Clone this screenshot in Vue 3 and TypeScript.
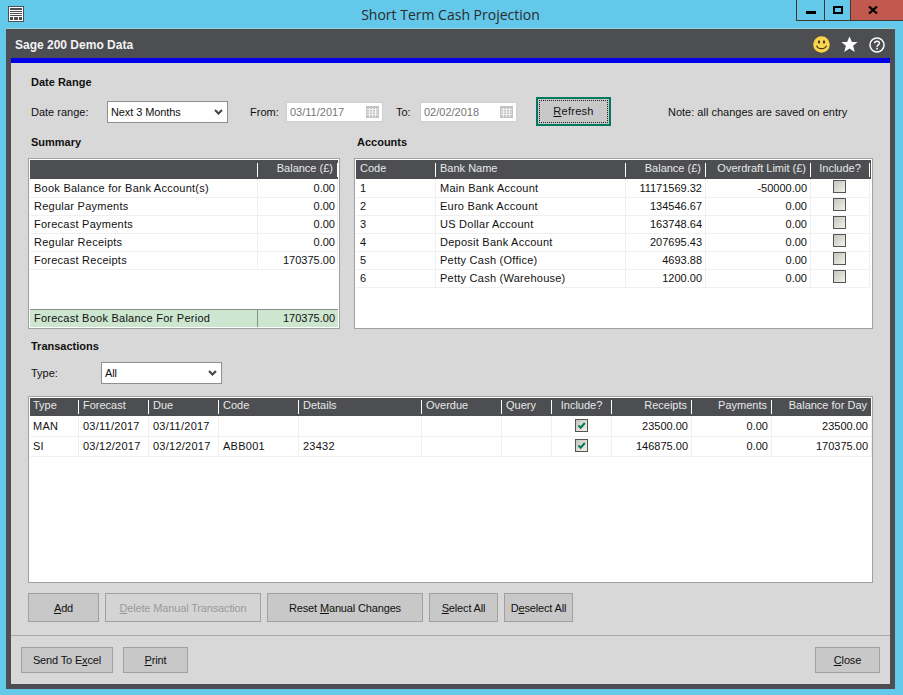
<script setup lang="ts">
interface SummaryRow {
  label: string
  balance: string
}
interface AccountRow {
  code: string
  name: string
  balance: string
  overdraft: string
}
interface TransactionRow {
  type: string
  forecast: string
  due: string
  code: string
  details: string
  receipts: string
  payments: string
  balance: string
}

const summaryRows: SummaryRow[] = [
  { label: 'Book Balance for Bank Account(s)', balance: '0.00' },
  { label: 'Regular Payments', balance: '0.00' },
  { label: 'Forecast Payments', balance: '0.00' },
  { label: 'Regular Receipts', balance: '0.00' },
  { label: 'Forecast Receipts', balance: '170375.00' }
]

const accountRows: AccountRow[] = [
  { code: '1', name: 'Main Bank Account', balance: '11171569.32', overdraft: '-50000.00' },
  { code: '2', name: 'Euro Bank Account', balance: '134546.67', overdraft: '0.00' },
  { code: '3', name: 'US Dollar Account', balance: '163748.64', overdraft: '0.00' },
  { code: '4', name: 'Deposit Bank Account', balance: '207695.43', overdraft: '0.00' },
  { code: '5', name: 'Petty Cash (Office)', balance: '4693.88', overdraft: '0.00' },
  { code: '6', name: 'Petty Cash (Warehouse)', balance: '1200.00', overdraft: '0.00' }
]

const transactionRows: TransactionRow[] = [
  { type: 'MAN', forecast: '03/11/2017', due: '03/11/2017', code: '', details: '', receipts: '23500.00', payments: '0.00', balance: '23500.00' },
  { type: 'SI', forecast: '03/12/2017', due: '03/12/2017', code: 'ABB001', details: '23432', receipts: '146875.00', payments: '0.00', balance: '170375.00' }
]
</script>

<template>
  <div class="desktop">
    <!-- OS title bar -->
    <header class="titlebar">
      <svg class="app-icon" width="16" height="16" viewBox="0 0 16 16">
        <rect width="16" height="16" fill="#4d4e52" />
        <rect x="1" y="1" width="14" height="14" fill="#fff" />
        <rect x="2" y="2" width="12" height="2" fill="#4d4e52" />
        <rect x="2" y="5" width="12" height="1" fill="#4d4e52" />
        <rect x="2" y="7" width="12" height="1" fill="#4d4e52" />
        <rect x="2" y="9" width="12" height="1" fill="#4d4e52" />
        <rect x="2" y="11" width="3" height="3" fill="#4d4e52" />
        <rect x="6" y="11" width="4" height="3" fill="#4d4e52" />
        <rect x="11" y="11" width="3" height="3" fill="#4d4e52" />
      </svg>
      <span class="title-text">Short Term Cash Projection</span>
      <div class="win-controls">
        <div class="win-btn win-min"><span class="min-glyph" /></div>
        <div class="win-btn win-max"><span class="max-glyph" /></div>
        <div class="win-btn win-close">
          <svg width="10" height="8" viewBox="0 0 10 8">
            <path d="M1 0.5L9 7.5M9 0.5L1 7.5" stroke="#000" stroke-width="2.2" fill="none" />
          </svg>
        </div>
      </div>
    </header>

    <div class="window">
      <div class="window-head">
        <span class="company">Sage 200 Demo Data</span>
        <div class="head-icons">
          <svg width="17" height="17" viewBox="0 0 17 17">
            <circle cx="8.5" cy="8.5" r="8.3" fill="#fbd44c" />
            <ellipse cx="6" cy="6" rx="1.1" ry="1.7" fill="#3c3a2c" />
            <ellipse cx="11" cy="6" rx="1.1" ry="1.7" fill="#3c3a2c" />
            <path d="M3.6 9.6C4.6 13.6 12.4 13.6 13.4 9.6" stroke="#3c3a2c" stroke-width="1.2" fill="none" />
          </svg>
          <svg width="17" height="17" viewBox="0 0 17 17">
            <path d="M8.5 0.5L10.9 6H16.6L12.1 9.8L13.8 16L8.5 12.5L3.2 16L4.9 9.8L0.4 6H6.1Z" fill="#fff" />
          </svg>
          <svg width="16" height="16" viewBox="0 0 16 16">
            <circle cx="8" cy="8" r="7" stroke="#fff" stroke-width="1.5" fill="none" />
            <path d="M5.6 6.2C5.7 3.6 10.4 3.6 10.4 6.2C10.4 7.8 8 7.8 8 9.8" stroke="#fff" stroke-width="1.5" fill="none" />
            <rect x="7.2" y="10.8" width="1.6" height="1.7" fill="#fff" />
          </svg>
        </div>
      </div>
      <div class="blue-rule" />

      <main class="content">
        <h2 class="section-title">Date Range</h2>
        <div class="range-row">
          <label class="field-label label-range">Date range:</label>
          <div class="select-wrap select-range">
            <select class="select-box">
              <option>Next 3 Months</option>
            </select>
            <svg class="chevron" width="9" height="6" viewBox="0 0 9 6">
              <path d="M1 1L4.5 4.5L8 1" stroke="#444" stroke-width="2" fill="none" />
            </svg>
          </div>
          <label class="field-label label-from">From:</label>
          <div class="date-box">
            <input class="date-input" value="03/11/2017" readonly />
            <svg class="cal-icon" width="13" height="12" viewBox="0 0 13 12">
              <rect width="13" height="12" fill="#c4c4c4" />
              <path d="M1 3.5H12M1 6H12M1 8.5H12M3.5 2V11M6.5 2V11M9.5 2V11" stroke="#f2f2f2" stroke-width="1" fill="none" />
            </svg>
          </div>
          <label class="field-label label-to">To:</label>
          <div class="date-box">
            <input class="date-input" value="02/02/2018" readonly />
            <svg class="cal-icon" width="13" height="12" viewBox="0 0 13 12">
              <rect width="13" height="12" fill="#c4c4c4" />
              <path d="M1 3.5H12M1 6H12M1 8.5H12M3.5 2V11M6.5 2V11M9.5 2V11" stroke="#f2f2f2" stroke-width="1" fill="none" />
            </svg>
          </div>
          <button class="refresh-btn"><span class="refresh-inner"><u>R</u>efresh</span></button>
          <span class="note">Note: all changes are saved on entry</span>
        </div>

        <div class="panels">
          <section class="summary-col">
            <h2 class="section-title">Summary</h2>
            <div class="grid-box summary-box">
              <div class="grid-head summary-cols">
                <span class="hcell" />
                <span class="hcell right">Balance (£)</span>
              </div>
              <div v-for="row in summaryRows" :key="row.label" class="grid-row summary-cols">
                <span class="cell">{{ row.label }}</span>
                <span class="cell right">{{ row.balance }}</span>
              </div>
              <div class="summary-total summary-cols">
                <span class="cell">Forecast Book Balance For Period</span>
                <span class="cell right">170375.00</span>
              </div>
            </div>
          </section>

          <section class="accounts-col">
            <h2 class="section-title">Accounts</h2>
            <div class="grid-box accounts-box">
              <div class="grid-head account-cols">
                <span class="hcell">Code</span>
                <span class="hcell">Bank Name</span>
                <span class="hcell right">Balance (£)</span>
                <span class="hcell right">Overdraft Limit (£)</span>
                <span class="hcell center">Include?</span>
              </div>
              <div v-for="row in accountRows" :key="row.code" class="grid-row account-cols">
                <span class="cell">{{ row.code }}</span>
                <span class="cell">{{ row.name }}</span>
                <span class="cell right">{{ row.balance }}</span>
                <span class="cell right">{{ row.overdraft }}</span>
                <span class="cell center"><span class="check" /></span>
              </div>
            </div>
          </section>
        </div>

        <h2 class="section-title tx-title">Transactions</h2>
        <div class="type-row">
          <label class="field-label label-type">Type:</label>
          <div class="select-wrap select-type">
            <select class="select-box">
              <option>All</option>
            </select>
            <svg class="chevron" width="9" height="6" viewBox="0 0 9 6">
              <path d="M1 1L4.5 4.5L8 1" stroke="#444" stroke-width="2" fill="none" />
            </svg>
          </div>
        </div>

        <div class="grid-box tx-box">
          <div class="grid-head tx-head tx-cols">
            <span class="hcell">Type</span>
            <span class="hcell">Forecast</span>
            <span class="hcell">Due</span>
            <span class="hcell">Code</span>
            <span class="hcell">Details</span>
            <span class="hcell">Overdue</span>
            <span class="hcell">Query</span>
            <span class="hcell center">Include?</span>
            <span class="hcell right">Receipts</span>
            <span class="hcell right">Payments</span>
            <span class="hcell right">Balance for Day</span>
          </div>
          <div v-for="row in transactionRows" :key="row.type" class="grid-row tx-row tx-cols">
            <span class="cell">{{ row.type }}</span>
            <span class="cell">{{ row.forecast }}</span>
            <span class="cell">{{ row.due }}</span>
            <span class="cell">{{ row.code }}</span>
            <span class="cell">{{ row.details }}</span>
            <span class="cell" />
            <span class="cell" />
            <span class="cell center">
              <span class="check">
                <svg width="11" height="11" viewBox="0 0 11 11">
                  <path d="M2.5 5.5L4.7 7.7L8.8 3" stroke="#007a5e" stroke-width="2" fill="none" />
                </svg>
              </span>
            </span>
            <span class="cell right">{{ row.receipts }}</span>
            <span class="cell right">{{ row.payments }}</span>
            <span class="cell right">{{ row.balance }}</span>
          </div>
        </div>

        <div class="action-row">
          <button class="btn w-add"><u>A</u>dd</button>
          <button class="btn w-wide disabled"><u>D</u>elete Manual Transaction</button>
          <button class="btn w-wide">Reset <u>M</u>anual Changes</button>
          <button class="btn w-select"><u>S</u>elect All</button>
          <button class="btn w-select">D<u>e</u>select All</button>
        </div>
      </main>

      <footer class="footer">
        <button class="btn foot-btn w-excel">Send To E<u>x</u>cel</button>
        <button class="btn foot-btn w-print"><u>P</u>rint</button>
        <button class="btn foot-btn w-close"><u>C</u>lose</button>
      </footer>
    </div>
  </div>
</template>

<style>
html,
body {
  margin: 0;
  padding: 0;
}
</style>

<style scoped>
* {
  box-sizing: border-box;
}

.desktop {
  width: 903px;
  height: 695px;
  background: #63c8ea;
  display: flex;
  flex-direction: column;
  overflow: hidden;
  font-family: 'Liberation Sans', Arial, sans-serif;
  font-size: 11px;
  color: #111;
}

/* === Title bar === */
.titlebar {
  height: 29px;
  flex-shrink: 0;
  display: flex;
  justify-content: center;
  position: relative;
}

.app-icon {
  position: absolute;
  left: 8px;
  top: 6px;
}

.title-text {
  font-family: 'Open Sans', sans-serif;
  font-size: 14px;
  color: #2b2b2b;
  padding-top: 5px;
  margin-right: 2px;
}

.win-controls {
  position: absolute;
  top: 0;
  right: 0;
  display: flex;
  height: 21px;
  border-left: 1px solid #3f3532;
  border-bottom: 1px solid #3f3532;
}

.win-btn {
  display: flex;
  align-items: center;
  justify-content: center;
}

.win-min {
  width: 28px;
  border-right: 1px solid #3f3532;
}

.win-max {
  width: 26px;
  border-right: 1px solid #3f3532;
}

.win-close {
  width: 52px;
  padding-right: 8px;
  background: #c1594e;
}

.min-glyph {
  width: 10px;
  height: 3px;
  background: #000;
  margin-top: 5px;
}

.max-glyph {
  width: 10px;
  height: 8px;
  border: 2px solid #000;
}

/* === Window frame === */
.window {
  flex: 1;
  margin: 0 8px 6px 6px;
  border: 5px solid #4d4e52;
  border-top: none;
  background: #d8d8d8;
  display: flex;
  flex-direction: column;
  min-height: 0;
  box-shadow: 0 -1px 0 #9cc;
}

.window-head {
  height: 29px;
  margin: 0 -5px;
  padding: 2px 10px 0 9px;
  background: #4d4e52;
  display: flex;
  align-items: center;
  justify-content: space-between;
  flex-shrink: 0;
}

.company {
  font-size: 12px;
  font-weight: 700;
  color: #f2f2f2;
}

.head-icons {
  display: flex;
  align-items: center;
  gap: 11px;
}

.blue-rule {
  height: 5px;
  background: #0000e6;
  flex-shrink: 0;
}

.content {
  flex: 1;
  padding: 0 17px;
  min-height: 0;
}

.section-title {
  margin: 0;
  padding-left: 3px;
  font-size: 11px;
  font-weight: 700;
  line-height: 13px;
  color: #111;
}

.content > .section-title:first-child {
  margin-top: 13px;
}

/* === Date range row === */
.range-row {
  display: flex;
  align-items: center;
  height: 30px;
  margin-top: 7px;
}

.range-row > .field-label,
.range-row > .select-wrap,
.range-row > .date-box,
.range-row > .note {
  margin-top: 2px;
}

.field-label {
  padding-left: 3px;
  white-space: nowrap;
}

.label-range {
  width: 79px;
}

.label-from {
  width: 36px;
  margin-left: 22px;
  padding-left: 0;
}

.label-to {
  width: 24px;
  margin-left: 13px;
  padding-left: 0;
}

.select-wrap {
  position: relative;
  height: 22px;
}

.select-range {
  width: 121px;
}

.select-type {
  width: 121px;
}

.select-box {
  appearance: none;
  width: 100%;
  height: 100%;
  padding: 0 0 0 3px;
  border: 1px solid #8f8f8f;
  border-radius: 0;
  background: #fff;
  font: inherit;
  letter-spacing: -0.1px;
  color: #111;
}

.chevron {
  position: absolute;
  right: 5px;
  top: 8px;
}

.date-box {
  width: 97px;
  height: 20px;
  display: flex;
  align-items: center;
  justify-content: space-between;
  padding-right: 3px;
  background: #fff;
  border: 1px solid #cfcfcf;
}

.date-input {
  width: 76px;
  border: none;
  outline: none;
  padding: 0 0 0 3px;
  background: transparent;
  font: inherit;
  color: #777;
}

.refresh-btn {
  width: 75px;
  height: 29px;
  margin-left: 19px;
  padding: 1px;
  border: 2px solid #00795f;
  background: #c8c8c8;
  font: inherit;
  letter-spacing: 0.25px;
  color: #111;
}

.refresh-inner {
  display: flex;
  align-items: center;
  justify-content: center;
  height: 100%;
  border: 1px dotted #222;
}

.note {
  margin-left: 57px;
  white-space: nowrap;
}

/* === Grids === */
.panels {
  display: flex;
  gap: 14px;
  margin-top: 10px;
}

.summary-col {
  width: 312px;
}

.accounts-col {
  width: 519px;
}

.grid-box {
  margin-top: 9px;
  padding: 1px;
  border: 1px solid #a0a0a0;
  background: #fff;
  display: flex;
  flex-direction: column;
}

.summary-box,
.accounts-box {
  height: 171px;
}

.grid-head {
  height: 19px;
  flex-shrink: 0;
  background: #4d4e52;
  color: #e8e8e8;
  display: grid;
  align-items: center;
}

.tx-head {
  height: 18px;
}

.hcell {
  height: 14px;
  line-height: 11px;
  padding: 0 4px;
  white-space: nowrap;
  border-right: 1px solid #fff;
}

.grid-row {
  height: 18px;
  flex-shrink: 0;
  display: grid;
}

.cell {
  line-height: 18px;
  padding: 0 3px 0 4px;
  white-space: nowrap;
  letter-spacing: 0.25px;
  border-right: 1px solid #f0f0f0;
  border-bottom: 1px solid #f0f0f0;
}

.cell.right {
  letter-spacing: 0;
}

.right {
  text-align: right;
}

.center {
  text-align: center;
}

.cell.center {
  padding-right: 5px;
}

.summary-cols {
  grid-template-columns: 228px 1fr;
}

.summary-cols .cell.right {
  padding-right: 2px;
}

.summary-total {
  height: 18px;
  margin-top: auto;
  display: grid;
  background: #cde6cf;
  border-top: 1px solid #8a8f8a;
}

.summary-total .cell {
  line-height: 17px;
  border-bottom: none;
  border-right-color: transparent;
}

.summary-total .cell:first-child {
  border-right-color: #8a8f8a;
}

.account-cols {
  grid-template-columns: 80px 190px 80px 105px 59px;
}

.check {
  display: inline-flex;
  width: 13px;
  height: 13px;
  margin-top: 1px;
  vertical-align: top;
  border: 1px solid #555;
  background: linear-gradient(135deg, #c4c4c0, #f4f2e8);
}

.tx-title {
  margin-top: 11px;
}

.type-row {
  display: flex;
  align-items: center;
  margin-top: 9px;
}

.label-type {
  width: 73px;
}

.tx-box {
  height: 187px;
  margin-top: 12px;
}

.tx-cols {
  grid-template-columns: 49px 70px 70px 80px 123px 80px 50px 60px 80px 80px 100px;
}

.tx-cols > :first-child {
  padding-left: 3px;
}

.tx-row {
  height: 20px;
}

.tx-row .cell {
  line-height: 20px;
}

.tx-row .check {
  margin-top: 3px;
}

/* === Buttons === */
.action-row {
  display: flex;
  gap: 6px;
  margin-top: 10px;
}

.btn {
  height: 29px;
  padding: 0;
  border: 1px solid #a0a0a0;
  background: #c8c8c8;
  font: inherit;
  letter-spacing: -0.15px;
  color: #111;
}

.btn.disabled {
  background: #d4d4d4;
  color: #9a9a9a;
}

.w-add {
  width: 71px;
}

.w-wide {
  width: 156px;
}

.w-select {
  width: 69px;
}

.footer {
  height: 49px;
  flex-shrink: 0;
  border-top: 1px solid #a8a8a8;
  padding: 11px 10px 0;
  display: flex;
  gap: 10px;
}

.foot-btn {
  height: 26px;
}

.w-excel {
  width: 92px;
}

.w-print {
  width: 65px;
}

.w-close {
  width: 65px;
  margin-left: auto;
}
</style>
